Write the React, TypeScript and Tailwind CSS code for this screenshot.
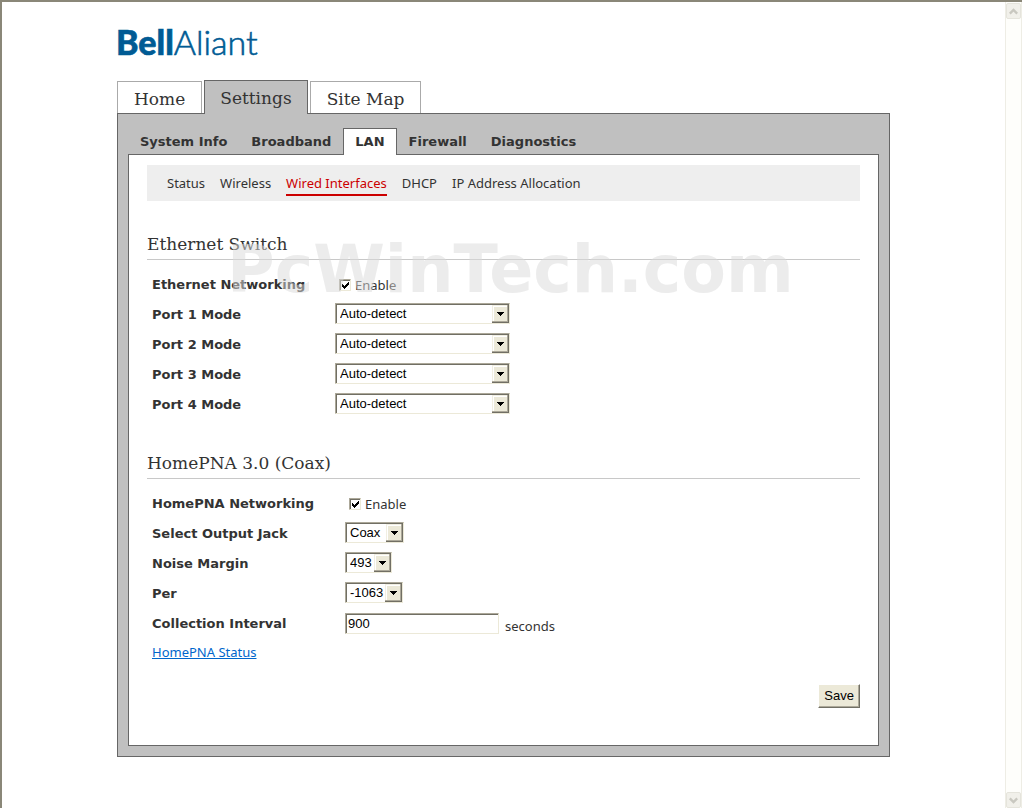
import { useState } from "react";
import clsx from "clsx";

const mainTabs = ["Home", "Settings", "Site Map"];
const sectionTabs = ["System Info", "Broadband", "LAN", "Firewall", "Diagnostics"];
const pageLinks = ["Status", "Wireless", "Wired Interfaces", "DHCP", "IP Address Allocation"];
const ports = [1, 2, 3, 4];

function Logo() {
  return (
    <a href="#home" aria-label="Bell Aliant" className="block h-8 w-36">
      <svg viewBox="0 0 144 32" className="h-8 w-36 overflow-visible" fill="#005b94" stroke="#005b94">
        <text x="-1" y="27" fontFamily="Lato, sans-serif" fontSize="34">
          <tspan fontWeight="900" strokeWidth="0.6">Bell</tspan>
          <tspan fontWeight="300" strokeWidth="0.6">Aliant</tspan>
        </text>
      </svg>
    </a>
  );
}

function SelectBox({ id, value, className }: { id: string; value: string; className: string }) {
  return (
    <span className={clsx("relative inline-flex", className)}>
      <select
        id={id}
        defaultValue={value}
        className="h-[21px] w-full appearance-none rounded-none border border-t-[#aca899] border-r-[#ece9d8] border-b-[#ece9d8] border-l-[#aca899] bg-white pt-px pr-4 pl-1 font-['Liberation_Sans',sans-serif] text-[13px] leading-[18px] text-black shadow-[inset_1px_1px_0_#716f64]"
      >
        <option>{value}</option>
      </select>
      <svg
        viewBox="0 0 17 18"
        shapeRendering="crispEdges"
        className="pointer-events-none absolute top-0.5 right-px h-[18px] w-[17px]"
      >
        <path d="M0 0h17v18H0z" fill="#716f64" />
        <path d="M0 0h16v17H0z" fill="#aca899" />
        <path d="M0 0h15v16H0z" fill="#f1efe2" />
        <path d="M1 1h14v15H1z" fill="#fff" />
        <path d="M2 2h13v14H2z" fill="#ece9d8" />
        <path d="M5 7h7v1H5zM6 8h5v1H6zM7 9h3v1H7zM8 10h1v1H8z" fill="#000" />
      </svg>
    </span>
  );
}

function EnableBox({ id }: { id: string }) {
  const [checked, setChecked] = useState(true);

  return (
    <span className="ml-1 flex items-center gap-1 pt-[3px]">
      <span className="relative flex">
        <input
          id={id}
          type="checkbox"
          checked={checked}
          onChange={(e) => setChecked(e.target.checked)}
          className="size-3 appearance-none border border-t-[#aca899] border-r-[#ece9d8] border-b-[#ece9d8] border-l-[#aca899] bg-white shadow-[inset_1px_1px_0_#716f64]"
        />
        {checked && (
          <svg
            viewBox="0 0 12 12"
            shapeRendering="crispEdges"
            className="pointer-events-none absolute inset-0 size-3"
          >
            <path d="M3 5h1v3H3zM4 6h1v3H4zM5 7h1v3H5zM6 6h1v3H6zM7 5h1v3H7zM8 4h1v3H8zM9 3h1v3H9z" fill="#000" />
          </svg>
        )}
      </span>
      <label htmlFor={id}>Enable</label>
    </span>
  );
}

function RowLabel({ id, children }: { id: string; children: React.ReactNode }) {
  return (
    <label htmlFor={id} className="pt-[3px] font-['DejaVu_Sans',sans-serif] leading-[18px] font-bold">
      {children}
    </label>
  );
}

function SectionTitle({ children }: { children: React.ReactNode }) {
  return (
    <h2 className="border-b border-[#c8c8c8] pb-1 font-['DejaVu_Serif',serif] text-[17px] leading-[22px]">
      {children}
    </h2>
  );
}

function ScrollButton({ label, path }: { label: string; path: string }) {
  return (
    <button
      type="button"
      aria-label={label}
      className="flex h-4 w-[15px] items-center justify-center rounded-xs border border-[#e5e4dc] bg-[#f1f0ea]"
    >
      <svg viewBox="0 0 9 7" className="h-[7px] w-[9px]" fill="none" stroke="#c9c8c0" strokeWidth="2.4">
        <path d={path} />
      </svg>
    </button>
  );
}

export default function App() {
  return (
    <div className="flex min-h-screen border-t-2 border-l-2 border-[#8a8778] bg-white font-['Noto_Sans',sans-serif] text-[13px] leading-5 text-[#333]">
      <div className="min-w-0 flex-1 pt-[26px] pb-12">
        <div className="mx-auto max-w-[773px]">
          <Logo />

          <nav className="mt-5 flex items-end gap-0.5 font-['DejaVu_Serif',serif] text-[17px]">
            {mainTabs.map((tab) => (
              <a
                key={tab}
                href="#"
                className={clsx(
                  "border border-b-0",
                  tab === "Settings"
                    ? "relative -mb-px h-[34px] border-[#666] bg-[#c0c0c0] px-[15px] leading-[34px]"
                    : "h-8 border-[#aaa] bg-white px-4 leading-[34px]"
                )}
              >
                {tab}
              </a>
            ))}
          </nav>

          <div className="border border-[#666] bg-[#c0c0c0] px-2.5 pt-3.5 pb-2.5">
            <nav className="flex font-['DejaVu_Sans',sans-serif] font-bold">
              {sectionTabs.map((tab) => (
                <a
                  key={tab}
                  href="#"
                  className={clsx(
                    "border border-b-0 px-[11px] leading-[25px]",
                    tab === "LAN" ? "relative -mb-px h-[27px] border-[#666] bg-white" : "h-[26px] border-transparent"
                  )}
                >
                  {tab}
                </a>
              ))}
            </nav>

            <main className="border border-[#666] bg-white px-[18px] pt-2.5 pb-[37px]">
              <nav className="flex h-9 items-center gap-[15px] bg-[#eee] px-5">
                {pageLinks.map((link) => (
                  <a
                    key={link}
                    href="#"
                    className={clsx(
                      "border-b-2 pt-[3px] pb-px",
                      link === "Wired Interfaces" ? "border-[#c00] text-[#c00]" : "border-transparent"
                    )}
                  >
                    {link}
                  </a>
                ))}
              </nav>

              <section className="relative mt-8">
                <SectionTitle>Ethernet Switch</SectionTitle>
                <div className="mt-[13px] grid auto-rows-[21px] grid-cols-[183px_1fr] items-center gap-y-[9px] pl-[5px]">
                  <RowLabel id="ethernet">Ethernet Networking</RowLabel>
                  <EnableBox id="ethernet" />
                  {ports.map((port) => (
                    <div key={port} className="col-span-2 grid grid-cols-subgrid items-center">
                      <RowLabel id={`port-${port}`}>Port {port} Mode</RowLabel>
                      <SelectBox id={`port-${port}`} value="Auto-detect" className="w-[175px]" />
                    </div>
                  ))}
                </div>
                {/* Watermark laid over the heading and first row */}
                <div className="pointer-events-none absolute top-0 left-20 font-['DejaVu_Sans',sans-serif] text-[65px] leading-[74px] font-bold text-[#dbdbdb] opacity-50">
                  PcWinTech.com
                </div>
              </section>

              <section className="mt-[38px]">
                <SectionTitle>HomePNA 3.0 (Coax)</SectionTitle>
                <div className="mt-[13px] grid auto-rows-[21px] grid-cols-[193px_1fr] items-center gap-y-[9px] pl-[5px]">
                  <RowLabel id="homepna">HomePNA Networking</RowLabel>
                  <EnableBox id="homepna" />
                  <RowLabel id="jack">Select Output Jack</RowLabel>
                  <SelectBox id="jack" value="Coax" className="w-[59px]" />
                  <RowLabel id="noise">Noise Margin</RowLabel>
                  <SelectBox id="noise" value="493" className="w-[47px]" />
                  <RowLabel id="per">Per</RowLabel>
                  <SelectBox id="per" value="-1063" className="w-[58px]" />
                  <RowLabel id="interval">Collection Interval</RowLabel>
                  <div className="flex items-end gap-1.5 pt-0.5">
                    <input
                      id="interval"
                      type="text"
                      defaultValue="900"
                      className="h-[21px] w-[154px] border border-t-[#aca899] border-r-[#ece9d8] border-b-[#ece9d8] border-l-[#aca899] bg-white px-0.5 font-['Liberation_Sans',sans-serif] text-[13px] text-black shadow-[inset_1px_1px_0_#716f64]"
                    />
                    <span className="h-[18px]">seconds</span>
                  </div>
                </div>
                <a href="#" className="mt-[9px] ml-[5px] block w-fit text-[#0066cc] underline">
                  HomePNA Status
                </a>
              </section>

              <div className="mt-[22px] flex justify-end">
                <button
                  type="button"
                  className="h-6 border border-t-white border-r-[#716f64] border-b-[#716f64] border-l-white bg-[#ece9d8] px-[5px] font-['Liberation_Sans',sans-serif] text-[13px] text-black shadow-[inset_-1px_-1px_0_#aca899]"
                >
                  Save
                </button>
              </div>
            </main>
          </div>
        </div>
      </div>

      <div className="flex w-[17px] shrink-0 flex-col justify-between border-x border-[#eeede5] bg-[#fefefb] pt-px">
        <ScrollButton label="Scroll up" path="M.8 5.6 4.5 1.9l3.7 3.7" />
        <ScrollButton label="Scroll down" path="M.8 1.4l3.7 3.7 3.7-3.7" />
      </div>
    </div>
  );
}
